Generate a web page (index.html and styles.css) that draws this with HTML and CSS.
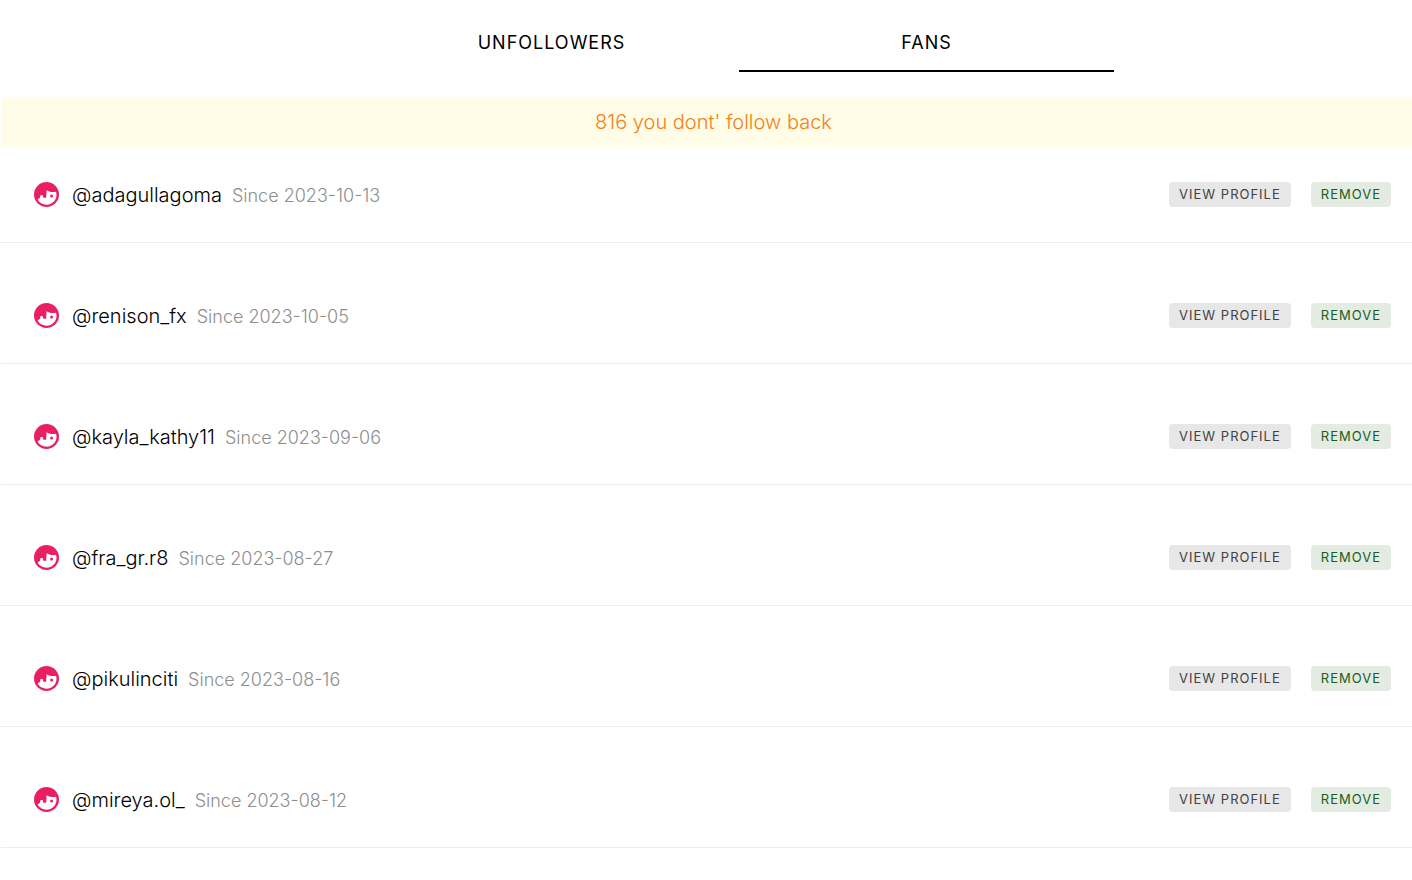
FILE: index.html
```
<!DOCTYPE html>
<html lang="en">
<head>
  <meta charset="utf-8">
  <title>Fans</title>
  <link rel="stylesheet" href="styles.css">
</head>
<body>
  <svg class="sprite" aria-hidden="true">
    <symbol id="face" viewBox="0 0 25 25">
      <circle cx="12.5" cy="12.5" r="12.5" fill="#e91e63"/>
      <path d="M3.6 17.6L6 15.8L6.6 13H8.6L9.4 15.8H12.2L12.6 8.2C14.8 9.9 18 10.3 22 9.8C22.4 10.8 22.5 11.8 22.5 13C22.5 18.4 18 22.7 12.6 22.7C8.6 22.7 5.3 20.8 3.6 17.6Z" fill="#fff"/>
      <circle cx="17.6" cy="13.9" r="1.5" fill="#e91e63"/>
    </symbol>
  </svg>

  <nav class="tabs">
    <a class="tab" href="#unfollowers">Unfollowers</a>
    <a class="tab active" href="#fans">Fans</a>
  </nav>

  <main id="fans">
    <p class="notice">816 you dont' follow back</p>
    <ul class="users">
      <li class="user">
        <svg class="avatar" aria-hidden="true"><use href="#face"/></svg>
        <span class="name">@adagullagoma</span>
        <span class="since">Since 2023-10-13</span>
        <div class="actions">
          <button class="btn view" type="button">View profile</button>
          <button class="btn remove" type="button">Remove</button>
        </div>
      </li>
      <li class="user">
        <svg class="avatar" aria-hidden="true"><use href="#face"/></svg>
        <span class="name">@renison_fx</span>
        <span class="since">Since 2023-10-05</span>
        <div class="actions">
          <button class="btn view" type="button">View profile</button>
          <button class="btn remove" type="button">Remove</button>
        </div>
      </li>
      <li class="user">
        <svg class="avatar" aria-hidden="true"><use href="#face"/></svg>
        <span class="name">@kayla_kathy11</span>
        <span class="since">Since 2023-09-06</span>
        <div class="actions">
          <button class="btn view" type="button">View profile</button>
          <button class="btn remove" type="button">Remove</button>
        </div>
      </li>
      <li class="user">
        <svg class="avatar" aria-hidden="true"><use href="#face"/></svg>
        <span class="name">@fra_gr.r8</span>
        <span class="since">Since 2023-08-27</span>
        <div class="actions">
          <button class="btn view" type="button">View profile</button>
          <button class="btn remove" type="button">Remove</button>
        </div>
      </li>
      <li class="user">
        <svg class="avatar" aria-hidden="true"><use href="#face"/></svg>
        <span class="name">@pikulinciti</span>
        <span class="since">Since 2023-08-16</span>
        <div class="actions">
          <button class="btn view" type="button">View profile</button>
          <button class="btn remove" type="button">Remove</button>
        </div>
      </li>
      <li class="user">
        <svg class="avatar" aria-hidden="true"><use href="#face"/></svg>
        <span class="name">@mireya.ol_</span>
        <span class="since">Since 2023-08-12</span>
        <div class="actions">
          <button class="btn view" type="button">View profile</button>
          <button class="btn remove" type="button">Remove</button>
        </div>
      </li>
    </ul>
  </main>
</body>
</html>
```

FILE: styles.css
```
* {
  box-sizing: border-box;
}

body {
  margin: 0;
  padding-left: 1px;
  background-color: #fff;
  color: #000;
  font-family: Inter, sans-serif;
  font-size: 20px;
}

.sprite {
  display: none;
}

.tabs {
  display: flex;
  justify-content: center;
  padding: 12px 0 25px 65px;
}

.tab {
  width: 375px;
  height: 60px;
  border-bottom: 2px solid transparent;
  color: #000;
  font-size: 18px;
  line-height: 62px;
  letter-spacing: 1px;
  text-align: center;
  text-decoration: none;
  text-transform: uppercase;
}

.tab.active {
  border-bottom-color: #000;
}

.notice {
  margin: 0;
  padding-left: 14px;
  background-color: #fffde7;
  color: #f57f17;
  font-weight: 300;
  line-height: 50px;
  text-align: center;
}

.users {
  margin: 0;
  padding: 0;
  list-style: none;
}

.user {
  display: flex;
  align-items: center;
  padding: 60px 21px 35px 33px;
  border-bottom: 1px solid #eee;
}

.user:first-child {
  padding-top: 35px;
}

.avatar {
  width: 25px;
  height: 25px;
  margin-right: 13px;
}

.name,
.since {
  height: 25px;
  line-height: 27px;
  font-weight: 300;
}

.since {
  margin-left: 10px;
  color: #8e8e8e;
  font-size: 18px;
}

.actions {
  display: flex;
  gap: 20px;
  margin-left: auto;
}

.btn {
  height: 25px;
  padding: 0 10px 2px;
  border: none;
  border-radius: 4px;
  font-family: inherit;
  font-size: 13px;
  letter-spacing: 1px;
  text-transform: uppercase;
  cursor: pointer;
}

.view {
  background-color: #e7e7e7;
  color: #424242;
}

.remove {
  background-color: #e3ebe3;
  color: #1b5e20;
}
```
